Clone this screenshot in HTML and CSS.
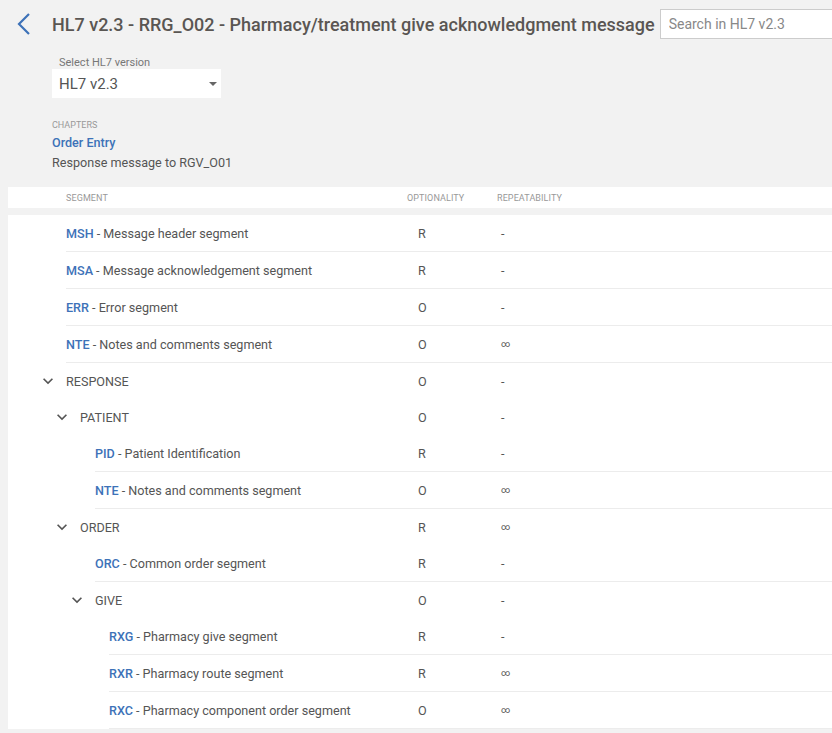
FILE: index.html
```html
<!DOCTYPE html>
<html>
<head>
<meta charset="utf-8">
<link rel="stylesheet" href="styles.css">
</head>
<body>
<header class="topbar">
  <a class="back" href="#" aria-label="Back">
    <svg width="14" height="22" viewBox="0 0 14 22"><polyline points="12,1 2,11 12,21" fill="none" stroke="#3d72b8" stroke-width="2.2"/></svg>
  </a>
  <h1 class="title">HL7 v2.3 - RRG_O02 - Pharmacy/treatment give acknowledgment message</h1>
  <input class="search" type="text" placeholder="Search in HL7 v2.3">
</header>

<section class="info">
  <div class="version">
    <div class="version-label">Select HL7 version</div>
    <div class="select">
      <span>HL7 v2.3</span>
      <span class="caret"></span>
    </div>
  </div>
  <div class="chapters-label">CHAPTERS</div>
  <a class="chapter" href="#">Order Entry</a>
  <div class="desc">Response message to RGV_O01</div>
</section>

<section class="table">
  <div class="thead">
    <div class="th th-name">SEGMENT</div>
    <div class="th th-opt">OPTIONALITY</div>
    <div class="th th-rep">REPEATABILITY</div>
  </div>
  <div class="tbody">
    <div class="row seg lvl0"><div class="cell name"><b>MSH</b>&nbsp;- Message header segment</div><div class="cell opt">R</div><div class="cell rep">-</div></div>
    <div class="row seg lvl0"><div class="cell name"><b>MSA</b>&nbsp;- Message acknowledgement segment</div><div class="cell opt">R</div><div class="cell rep">-</div></div>
    <div class="row seg lvl0"><div class="cell name"><b>ERR</b>&nbsp;- Error segment</div><div class="cell opt">O</div><div class="cell rep">-</div></div>
    <div class="row seg lvl0"><div class="cell name"><b>NTE</b>&nbsp;- Notes and comments segment</div><div class="cell opt">O</div><div class="cell rep inf">∞</div></div>
    <div class="row grp lvl0"><div class="cell name"><svg class="chev" width="20" height="20" viewBox="0 0 24 24"><path d="M16.59 8.59L12 13.17 7.41 8.59 6 10l6 6 6-6z" fill="#555"/></svg>RESPONSE</div><div class="cell opt">O</div><div class="cell rep">-</div></div>
    <div class="row grp lvl1"><div class="cell name"><svg class="chev" width="20" height="20" viewBox="0 0 24 24"><path d="M16.59 8.59L12 13.17 7.41 8.59 6 10l6 6 6-6z" fill="#555"/></svg>PATIENT</div><div class="cell opt">O</div><div class="cell rep">-</div></div>
    <div class="row seg lvl2"><div class="cell name"><b>PID</b>&nbsp;- Patient Identification</div><div class="cell opt">R</div><div class="cell rep">-</div></div>
    <div class="row seg lvl2"><div class="cell name"><b>NTE</b>&nbsp;- Notes and comments segment</div><div class="cell opt">O</div><div class="cell rep inf">∞</div></div>
    <div class="row grp lvl1"><div class="cell name"><svg class="chev" width="20" height="20" viewBox="0 0 24 24"><path d="M16.59 8.59L12 13.17 7.41 8.59 6 10l6 6 6-6z" fill="#555"/></svg>ORDER</div><div class="cell opt">R</div><div class="cell rep inf">∞</div></div>
    <div class="row seg lvl2"><div class="cell name"><b>ORC</b>&nbsp;- Common order segment</div><div class="cell opt">R</div><div class="cell rep">-</div></div>
    <div class="row grp lvl2"><div class="cell name"><svg class="chev" width="20" height="20" viewBox="0 0 24 24"><path d="M16.59 8.59L12 13.17 7.41 8.59 6 10l6 6 6-6z" fill="#555"/></svg>GIVE</div><div class="cell opt">O</div><div class="cell rep">-</div></div>
    <div class="row seg lvl3"><div class="cell name"><b>RXG</b>&nbsp;- Pharmacy give segment</div><div class="cell opt">R</div><div class="cell rep">-</div></div>
    <div class="row seg lvl3"><div class="cell name"><b>RXR</b>&nbsp;- Pharmacy route segment</div><div class="cell opt">R</div><div class="cell rep inf">∞</div></div>
    <div class="row seg lvl3"><div class="cell name"><b>RXC</b>&nbsp;- Pharmacy component order segment</div><div class="cell opt">O</div><div class="cell rep inf">∞</div></div>
  </div>
</section>
</body>
</html>
```

FILE: styles.css
```css
* { box-sizing: border-box; }

body {
  margin: 0;
  background: #f2f2f2;
  font-family: Roboto, "Liberation Sans", sans-serif;
  color: #555;
  overflow: hidden;
}

.topbar {
  display: flex;
  align-items: center;
  height: 48px;
  padding-left: 17px;
  white-space: nowrap;
}

.back {
  display: flex;
  width: 14px;
  height: 22px;
  margin-right: 21px;
}

.title {
  margin: 0;
  font-size: 18px;
  font-weight: 500;
  color: #5a5653;
  flex: 0 0 auto;
}

.search {
  margin-left: 5px;
  width: 174px;
  height: 30px;
  flex: 0 0 auto;
  border: 1px solid #ccc;
  background: #fff;
  padding: 0 8px;
  font-family: Roboto, "Liberation Sans", sans-serif;
  font-size: 14px;
  color: #555;
  outline: none;
}
.search::placeholder { color: #888; }

.info {
  padding-left: 52px;
}

.version {
  padding-top: 9px;
}

.version-label {
  padding-left: 7px;
  font-size: 11px;
  line-height: 12px;
  color: #777;
}

.select {
  display: flex;
  align-items: center;
  justify-content: space-between;
  width: 169px;
  height: 29px;
  background: #fff;
  padding: 0 4px 0 7px;
  font-size: 15px;
  color: #555;
}

.caret {
  width: 0;
  height: 0;
  border-left: 4px solid transparent;
  border-right: 4px solid transparent;
  border-top: 4px solid #666;
}

.chapters-label {
  margin-top: 21px;
  font-size: 9px;
  line-height: 12px;
  color: #999;
}

.chapter {
  display: block;
  margin-top: 4px;
  font-size: 12.6px;
  line-height: 16px;
  font-weight: 500;
  color: #3d72b8;
  text-decoration: none;
}

.desc {
  margin-top: 4px;
  font-size: 12.6px;
  line-height: 16px;
  color: #555;
}

.table {
  margin-top: 16px;
  margin-left: 8px;
}

.thead {
  display: grid;
  grid-template-columns: 399px 90px 1fr;
  height: 21px;
  align-items: center;
  background: #fff;
}

.th {
  font-size: 9px;
  color: #999;
  letter-spacing: 0.1px;
}
.th-name { padding-left: 58px; }

.tbody {
  margin-top: 7px;
  background: #fff;
}

.row {
  display: flex;
  margin-left: var(--ind);
}
.lvl0 { --ind: 58px; }
.lvl1 { --ind: 72px; }
.lvl2 { --ind: 87px; }
.lvl3 { --ind: 101px; }

.seg {
  height: 37px;
  border-bottom: 1px solid #ececec;
}
.grp {
  height: 36px;
}

.cell {
  display: flex;
  align-items: center;
  font-size: 12.6px;
  color: #555;
  white-space: nowrap;
}

.name {
  width: calc(399px - var(--ind));
}
.name b {
  font-weight: 500;
  color: #3d72b8;
}

.chev {
  margin-left: -28px;
  margin-right: 8px;
  flex: 0 0 auto;
}

.opt {
  width: 90px;
  padding-left: 11px;
}

.rep {
  flex: 1;
  padding-left: 4px;
}
.rep.inf { padding-left: 4px; font-size: 9px; }
```
